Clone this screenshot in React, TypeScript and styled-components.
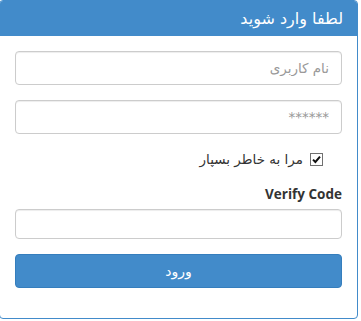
import React from "react";
import styled, { createGlobalStyle } from "styled-components";

const GlobalStyle = createGlobalStyle`
    html, body {
        margin: 0;
        padding: 0;
        background: #ffffff;
    }
    body {
        font-family: "DejaVu Sans", "Noto Sans", sans-serif;
        overflow: hidden;
    }
`;

const Panel = styled.div`
    direction: rtl;
    width: 359px;
    margin-left: -1px;
    box-sizing: border-box;
    border: 1px solid #428bca;
    border-radius: 4px;
    background: #ffffff;
    overflow: hidden;
`;

const PanelHeading = styled.div`
    height: 35px;
    background-color: #428bca;
    color: #ffffff;
    padding: 0 14px;
    display: flex;
    align-items: center;
    font-size: 16px;
`;

const PanelBody = styled.form`
    padding: 15px 15px 15px;
    display: flex;
    flex-direction: column;
`;

const Input = styled.input<{ $small?: boolean }>`
    box-sizing: border-box;
    width: 100%;
    height: ${(p) => (p.$small ? "30px" : "34px")};
    margin: 0 0 15px;
    padding: 0 12px;
    border: 1px solid #cccccc;
    border-radius: 4px;
    box-shadow: inset 0 1px 1px rgba(0, 0, 0, 0.075);
    font-family: "DejaVu Sans", sans-serif;
    font-size: 13.5px;
    color: #555555;
    direction: rtl;
    outline: none;

    &::placeholder {
        color: #999999;
    }
`;

const CheckRow = styled.label`
    display: flex;
    align-items: center;
    gap: 7px;
    height: 20px;
    margin: 0 0 15px;
    padding-right: 19px;
    font-size: 13.5px;
    color: #333333;
`;

const CheckBox = styled.span`
    box-sizing: border-box;
    width: 13px;
    height: 13px;
    border: 1px solid #707070;
    display: flex;
    align-items: center;
    justify-content: center;
    background: #ffffff;
`;

const Label = styled.div`
    font-family: "Open Sans", "Liberation Sans", sans-serif;
    font-weight: 700;
    font-size: 13.5px;
    line-height: 20px;
    color: #333333;
    margin-bottom: 5px;
`;

const SubmitButton = styled.button`
    box-sizing: border-box;
    width: 100%;
    height: 34px;
    margin-bottom: 15px;
    border: 1px solid #357ebd;
    border-radius: 4px;
    background-color: #428bca;
    color: #ffffff;
    font-family: "DejaVu Sans", sans-serif;
    font-size: 14px;
    cursor: pointer;
`;

const App = () => {
    return (
        <>
            <GlobalStyle />
            <Panel>
                <PanelHeading>لطفا وارد شوید</PanelHeading>
                <PanelBody onSubmit={(e) => e.preventDefault()}>
                    <Input type="text" placeholder="نام کاربری" />
                    <Input type="password" placeholder="******" />
                    <CheckRow>
                        <CheckBox>
                            <svg width="9" height="9" viewBox="0 0 9 9">
                                <path d="M1 4.6 L3.4 7 L8 1.6" fill="none" stroke="#111" strokeWidth="2" />
                            </svg>
                        </CheckBox>
                        مرا به خاطر بسپار
                    </CheckRow>
                    <Label>Verify Code</Label>
                    <Input type="text" $small />
                    <SubmitButton type="submit">ورود</SubmitButton>
                </PanelBody>
            </Panel>
        </>
    );
};

export default App;
